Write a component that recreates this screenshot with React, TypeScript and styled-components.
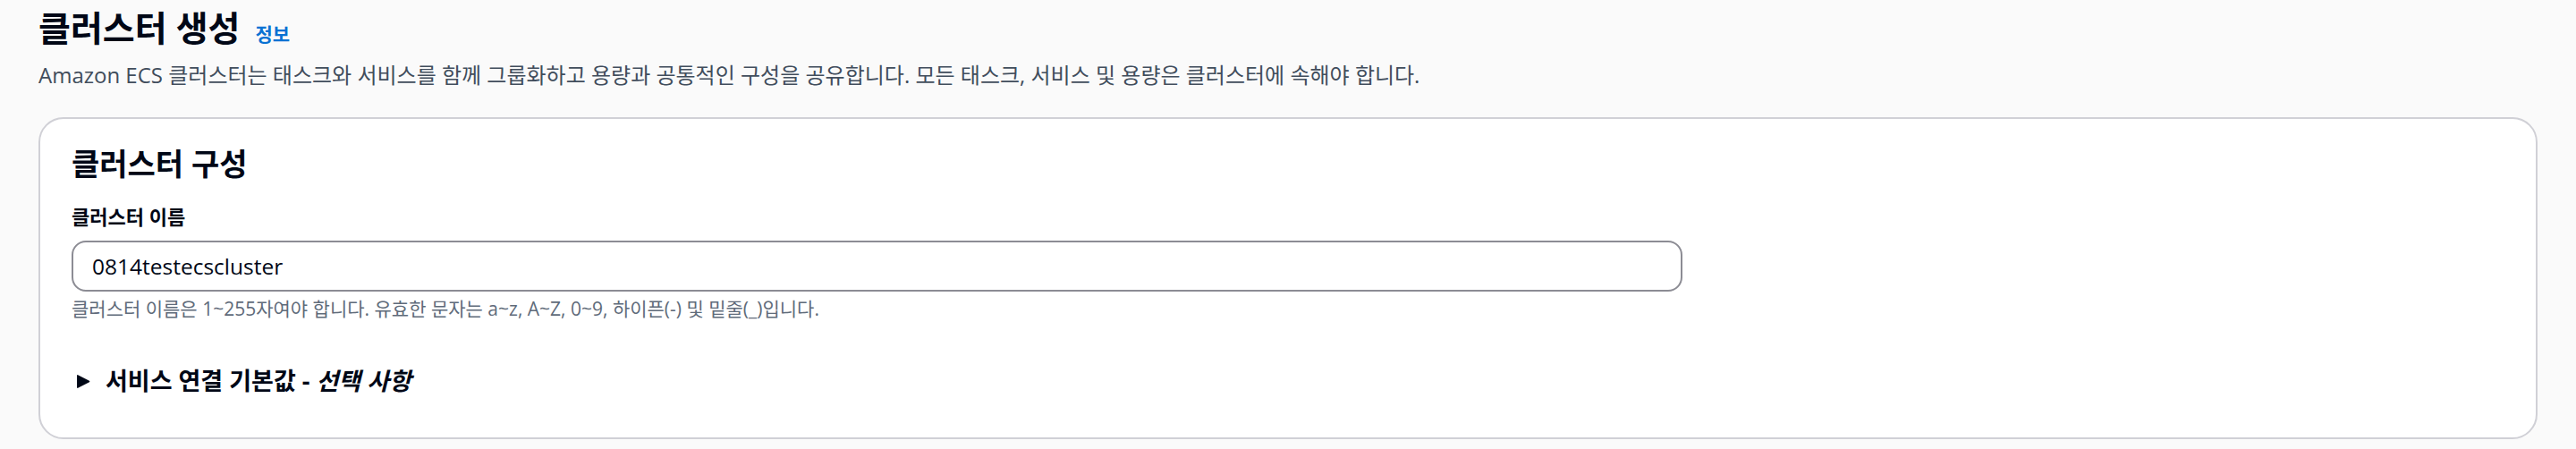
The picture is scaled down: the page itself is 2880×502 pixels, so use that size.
import styled, { createGlobalStyle } from 'styled-components';

const GlobalStyle = createGlobalStyle`
  html, body {
    margin: 0;
    padding: 0;
    background-color: #fafafa;
  }

  body {
    font-family: "Open Sans", "Noto Sans CJK KR", sans-serif;
    color: #000716;
  }
`;

const Page = styled.main`
  padding: 7px 43px 0;
`;

const Header = styled.header`
  display: flex;
  flex-direction: column;
  gap: 14px;
`;

const TitleRow = styled.div`
  display: flex;
  align-items: baseline;
  gap: 17px;
`;

const Title = styled.h1`
  margin: 0;
  font-size: 39px;
  line-height: 48px;
  font-weight: 700;
  color: #000716;
`;

const InfoLink = styled.a`
  font-size: 21px;
  font-weight: 700;
  color: #0972d3;
  text-decoration: none;
  cursor: pointer;
`;

const Description = styled.p`
  margin: 0;
  font-size: 24px;
  line-height: 30px;
  color: #414d5c;
`;

const Card = styled.section`
  margin-top: 32px;
  background-color: #ffffff;
  border: 2px solid #d0d0d6;
  border-radius: 28px;
  padding: 28px 35px 45px;
`;

const CardHeading = styled.h2`
  margin: 0;
  font-size: 34px;
  line-height: 44px;
  font-weight: 700;
  color: #000716;
`;

const Field = styled.div`
  display: flex;
  flex-direction: column;
  margin-top: 22px;
`;

const Label = styled.label`
  font-size: 22px;
  line-height: 30px;
  font-weight: 700;
  color: #000716;
`;

const TextInput = styled.input`
  box-sizing: border-box;
  margin-top: 12px;
  width: 100%;
  max-width: 1801px;
  height: 57px;
  padding: 0 21px;
  border: 2px solid #8c8c94;
  border-radius: 16px;
  background-color: #ffffff;
  font-family: inherit;
  font-size: 24.5px;
  color: #000716;
  outline: none;
`;

const Hint = styled.div`
  margin-top: 6px;
  font-size: 21px;
  line-height: 26px;
  color: #5f6b7a;
`;

const ExpandToggle = styled.button`
  display: flex;
  align-items: center;
  gap: 17px;
  margin-top: 50px;
  padding: 0 0 0 6px;
  border: none;
  background: none;
  font-family: inherit;
  font-size: 27px;
  line-height: 36px;
  font-weight: 700;
  color: #000716;
  cursor: pointer;
  text-align: left;
`;

const Optional = styled.em`
  font-style: italic;
`;

function CaretRight() {
  return (
    <svg width="15" height="17" viewBox="0 0 14 16" aria-hidden="true">
      <path d="M1 1.2 L13 7.2 Q14 8 13 8.8 L1 14.8 Q0 15.3 0 14.2 V1.8 Q0 0.7 1 1.2 Z" fill="#000716" />
    </svg>
  );
}

export default function App() {
  return (
    <>
      <GlobalStyle />
      <Page>
        <Header>
          <TitleRow>
            <Title>클러스터 생성</Title>
            <InfoLink>정보</InfoLink>
          </TitleRow>
          <Description>
            Amazon ECS 클러스터는 태스크와 서비스를 함께 그룹화하고 용량과 공통적인 구성을 공유합니다. 모든 태스크, 서비스 및 용량은 클러스터에 속해야 합니다.
          </Description>
        </Header>

        <Card>
          <CardHeading>클러스터 구성</CardHeading>
          <Field>
            <Label htmlFor="cluster-name">클러스터 이름</Label>
            <TextInput id="cluster-name" defaultValue="0814testecscluster" />
            <Hint>
              클러스터 이름은 1~255자여야 합니다. 유효한 문자는 a~z, A~Z, 0~9, 하이픈(-) 및 밑줄(_)입니다.
            </Hint>
          </Field>
          <ExpandToggle type="button">
            <CaretRight />
            <span>
              서비스 연결 기본값 - <Optional>선택 사항</Optional>
            </span>
          </ExpandToggle>
        </Card>
      </Page>
    </>
  );
}
